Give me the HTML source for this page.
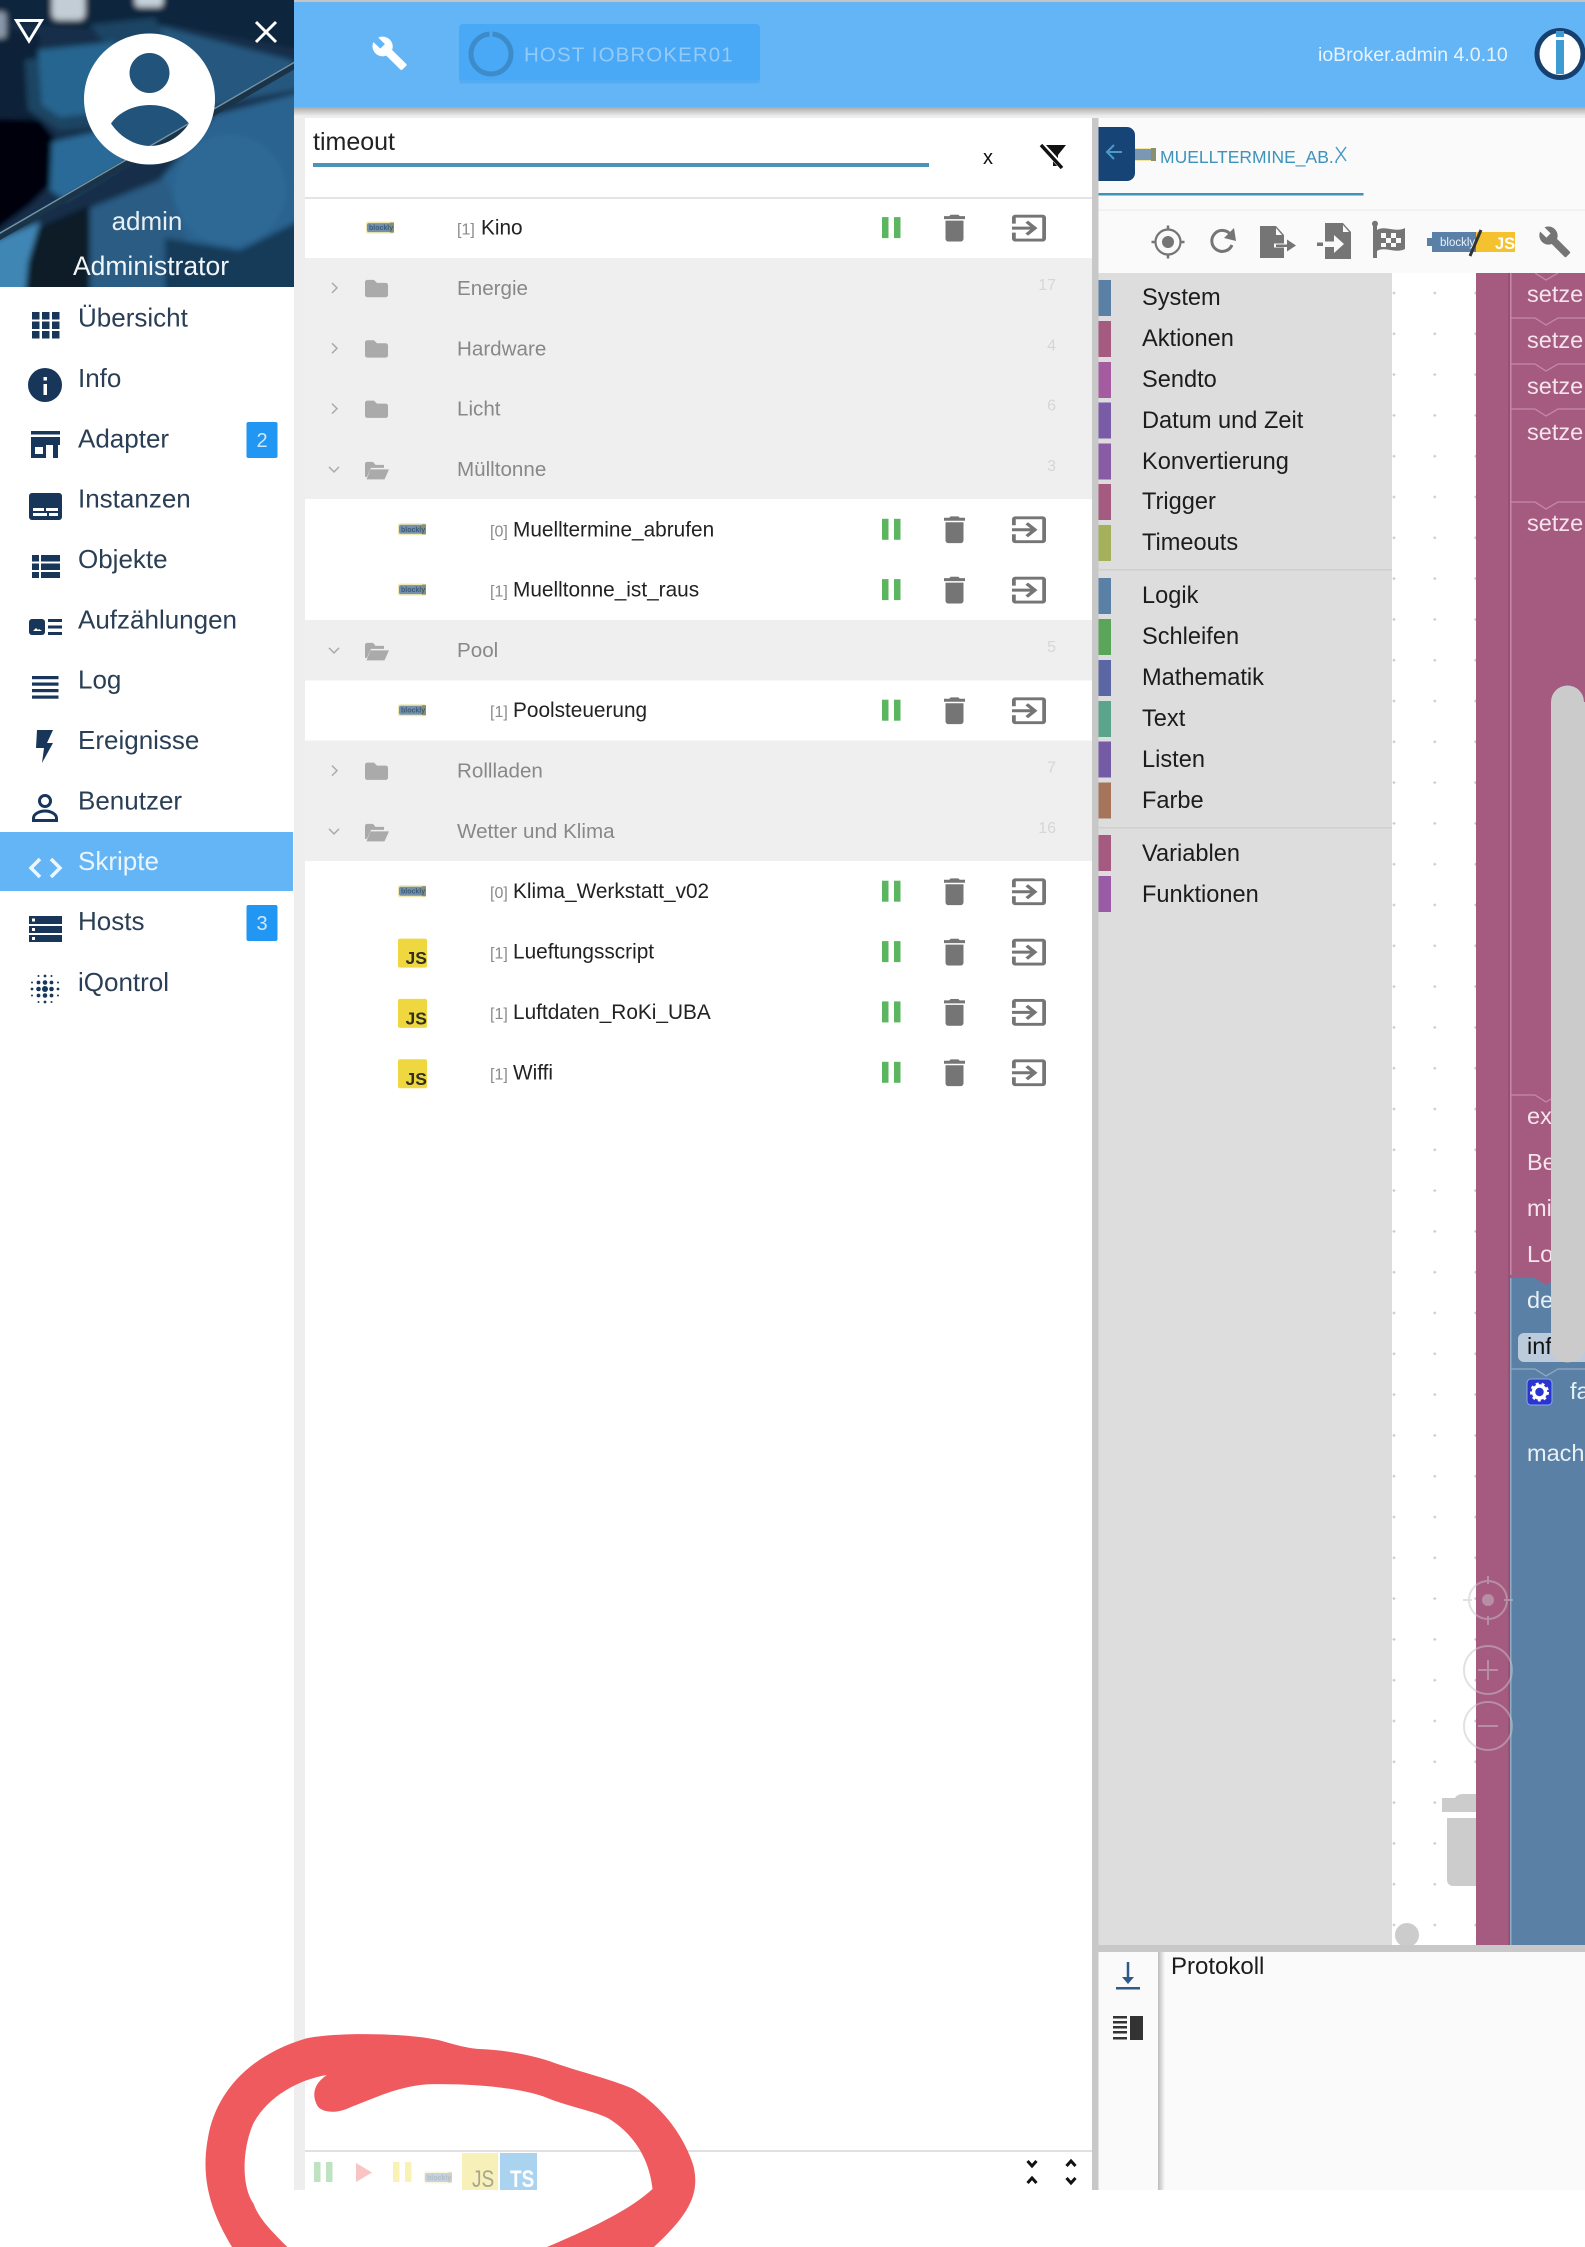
<!DOCTYPE html>
<html lang="de"><head><meta charset="utf-8"><title>ioBroker Skripte</title>
<style>
html,body{margin:0;padding:0;background:#fff;width:1585px;height:2247px;overflow:hidden}
svg{display:block;position:absolute;left:0;top:0}
text{font-family:"Liberation Sans",Arial,sans-serif;white-space:pre}
.m{font-size:26px;fill:#2a3f55}
.g{font-size:20.6px;fill:#888}
.n{font-size:20.8px;fill:#222}
.i{font-size:16px;fill:#8a8a8a}
.c{font-size:16px;fill:#d6d6d6;text-anchor:end}
.tb{font-size:23.6px;fill:#1c1c1c}
.s{font-size:23.5px;fill:#f5e4ec}
.b{font-size:23.5px;fill:#e8f0f7}
</style></head><body>
<svg width="1585" height="2247" viewBox="0 0 1585 2247" xmlns="http://www.w3.org/2000/svg">
<defs>
<linearGradient id="hs" x1="0" y1="0" x2="0" y2="1"><stop offset="0" stop-color="#a8a8a8"/><stop offset="1" stop-color="#eee"/></linearGradient>
<linearGradient id="ls" x1="0" y1="0" x2="1" y2="0"><stop offset="0" stop-color="#bbb"/><stop offset="1" stop-color="#fafafa"/></linearGradient>
<filter id="bl" x="-20%" y="-20%" width="140%" height="140%"><feGaussianBlur stdDeviation="3"/></filter>
<clipPath id="sc"><rect x="0" y="0" width="294" height="287"/></clipPath>
<clipPath id="wc"><rect x="1392" y="273" width="193" height="1672"/></clipPath>
<pattern id="grid" x="1373.6" y="272.6" width="40.8" height="40.8" patternUnits="userSpaceOnUse"><path d="M19 20.4h2.8M20.4 19v2.8" stroke="#c9c9c9" stroke-width="1.2"/></pattern>
<g id="controls">
<rect x="882" y="-10.5" width="6.5" height="21" fill="#5cb660"/><rect x="894" y="-10.5" width="6.5" height="21" fill="#5cb660"/>
<svg x="944" y="-13" width="21" height="27" viewBox="5 3 14 18" preserveAspectRatio="none" style="position:static"><path fill="#757575" d="M6 19c0 1.1.9 2 2 2h8c1.1 0 2-.9 2-2V7H6v12zM19 4h-3.5l-1-1h-5l-1 1H5v2h14V4z"/></svg>
<svg x="1012" y="-13" width="34" height="27" viewBox="3 3 18 18" preserveAspectRatio="none" style="position:static"><path fill="#757575" d="M10.09 15.59L11.5 17l5-5-5-5-1.41 1.41L12.67 11H3v2h9.67l-2.58 2.59zM19 3H5c-1.11 0-2 .9-2 2v4h2V5h14v14H5v-4H3v4c0 1.1.89 2 2 2h14c1.1 0 2-.9 2-2V5c0-1.1-.9-2-2-2z"/></svg>
</g>
<g id="blk">
<rect x="0" y="-6" width="28" height="12" fill="#efe9b4" rx="2"/>
<rect x="1" y="-4.5" width="25" height="9" fill="#7591aa" rx="2"/>
<rect x="24" y="-5" width="4" height="10" fill="#8a8f70"/>
<text x="3" y="2.5" font-size="7" font-weight="bold" fill="#3a5a78">blockly</text>
</g>
<g id="js">
<rect x="398" y="-13" width="29" height="29" rx="2" fill="#efd83f"/>
<text x="405.5" y="12.5" font-size="17.5" font-weight="bold" fill="#2f2f22">JS</text>
</g>
<path id="folder" d="M0 2.5C0 1.1 1 0 2.3 0H9l3 3h8.7C22 3 23 4 23 5.3V15c0 1.2-1 2.3-2.300 2.300H2.300C1 17.300 0 16.200 0 15z" fill="#aaa"/>
<path id="fopen" d="M0 2C0 .9 .9 0 2 0h6l2.500 3H19v3H6L2 15H0zM5.500 7.500H24L19.500 17.500H1.500z" fill="#aaa"/>
</defs>

<!-- page frame -->
<rect x="0" y="0" width="1585" height="2247" fill="#fff"/>
<rect x="294" y="0" width="1291" height="2190" fill="#eee"/>
<rect x="294" y="0" width="1291" height="3" fill="#c4c4c4"/>
<rect x="294" y="107" width="1291" height="9" fill="url(#hs)"/>
<rect x="294" y="2" width="1291" height="105" fill="#64b5f6"/>

<!-- header -->
<g transform="translate(371,35) scale(1.55)"><path fill="#fff" d="M22.7 19l-9.100-9.100c.9-2.300.4-5-1.500-6.900-2-2-5-2.400-7.400-1.300L9 6 6 9 1.600 4.700C.4 7.100.9 10.100 2.900 12.100c1.900 1.900 4.600 2.400 6.900 1.500l9.100 9.100c.4.400 1 .4 1.400 0l2.300-2.300c.5-.4.5-1.100.1-1.400z" transform="scale(1,.98)"/></g>
<rect x="459" y="24" width="301" height="59" rx="4" fill="#4aa9f6"/>
<rect x="459" y="80" width="301" height="4" fill="#5aaef3" opacity=".6"/>
<ellipse cx="491" cy="54" rx="20" ry="20" fill="none" stroke="#3d8cc9" stroke-width="5"/>
<rect x="489.500" y="30" width="3" height="20" fill="#4aa9f6"/>
<text x="524" y="61.500" font-size="20.500" letter-spacing="1.100" fill="#93cbf8">HOST IOBROKER01</text>
<text x="1318" y="61" font-size="19.500" fill="#e6f3fd">ioBroker.admin 4.0.10</text>
<ellipse cx="1560" cy="54" rx="23" ry="23.500" fill="#fff" stroke="#16406f" stroke-width="5"/>
<rect x="1556" y="31" width="8" height="6" fill="#3f9bd4"/>
<rect x="1556" y="40" width="8" height="34" fill="#3f9bd4"/>

<!-- sidebar -->
<rect x="0" y="0" width="294" height="2190" fill="#fff"/>
<g clip-path="url(#sc)"><g filter="url(#bl)">
<rect x="-30" y="-30" width="360" height="350" fill="#142f48"/>
<polygon points="-30,-30 330,-30 330,55 170,25 100,30 -30,20" fill="#10263c"/>
<polygon points="-30,20 40,35 35,130 -30,130" fill="#0c2438"/>
<polygon points="155,25 290,60 320,85 240,100 200,110 150,70" fill="#25597f"/>
<polygon points="90,25 155,18 175,60 110,50" fill="#1b4465"/>
<rect x="52" y="-8" width="33" height="28" rx="6" fill="#c2cdd6"/>
<rect x="135" y="-8" width="28" height="15" rx="4" fill="#c5d0da"/>
<rect x="-8" y="12" width="14" height="26" rx="3" fill="#8a9aaa"/>
<polygon points="25,60 110,50 120,125 60,130 28,110" fill="#1c4463"/>
<polygon points="38,50 115,42 105,112 60,117 42,105" fill="#286590"/>
<polygon points="-30,118 40,120 60,145 50,185 30,205 -30,250" fill="#02060a"/>
<polygon points="52,142 105,130 130,160 65,200 50,190" fill="#2a6a98"/>
<circle cx="149.500" cy="100" r="60" fill="#24537a"/>
<polygon points="215,115 330,85 330,320 170,320 160,180" fill="#2b6490"/>
<polygon points="90,208 165,178 215,320 90,320" fill="#295c84"/>
<polygon points="28,232 90,205 90,320 28,320" fill="#0a1a28"/>
<polygon points="-30,252 40,222 28,262 22,320 -30,320" fill="#3f86b5"/>
<circle cx="230" cy="190" r="56" fill="#2e6894"/>
<polygon points="165,238 240,250 330,205 330,320 165,320" fill="#163a58"/>
</g>
<line x1="-5" y1="239" x2="300" y2="62" stroke="#1b3346" stroke-width="7"/>
<line x1="-5" y1="236" x2="300" y2="59" stroke="#6f93aa" stroke-width="1.500"/>
</g>
<polygon points="16.500,20.500 41.500,20.500 29,41" fill="none" stroke="#fff" stroke-width="3"/>
<path d="M256 22L276 42M276 22L256 42" stroke="#fff" stroke-width="3"/>
<path fill="#fff" fill-rule="evenodd" d="M149.500 33.500a65.500 65.500 0 1 0 .01 0zM149.500 53a20 20 0 1 0 .01 0zM111 123.500C120 111 135 105 150 105S179 111 189 123.500C180 137 165 146 150 146S120 137 111 123.500z"/>
<text x="147" y="230" text-anchor="middle" font-size="26" fill="#e8f0f5">admin</text>
<text x="151" y="275" text-anchor="middle" font-size="26.500" fill="#f2f6f9">Administrator</text>

<!-- menu -->
<rect x="0" y="832" width="293" height="59" fill="#64b5f6"/>
<text class="m" x="78" y="326.600">Übersicht</text>
<text class="m" x="78" y="387">Info</text>
<text class="m" x="78" y="447.300">Adapter</text>
<text class="m" x="78" y="507.700">Instanzen</text>
<text class="m" x="78" y="568">Objekte</text>
<text class="m" x="78" y="628.400">Aufzählungen</text>
<text class="m" x="78" y="688.700">Log</text>
<text class="m" x="78" y="749">Ereignisse</text>
<text class="m" x="78" y="809.400">Benutzer</text>
<text class="m" x="78" y="869.800" style="fill:#eaf5fe">Skripte</text>
<text class="m" x="78" y="930">Hosts</text>
<text class="m" x="78" y="991">iQontrol</text>

<g fill="#17365a">
<!-- apps -->
<rect x="32" y="312" width="7.500" height="7.500"/><rect x="42" y="312" width="7.500" height="7.500"/><rect x="52" y="312" width="7.500" height="7.500"/>
<rect x="32" y="321.500" width="7.500" height="7.500"/><rect x="42" y="321.500" width="7.500" height="7.500"/><rect x="52" y="321.500" width="7.500" height="7.500"/>
<rect x="32" y="331" width="7.500" height="7.500"/><rect x="42" y="331" width="7.500" height="7.500"/><rect x="52" y="331" width="7.500" height="7.500"/>
<!-- info -->
<circle cx="45" cy="385" r="17"/><rect x="43.500" y="384" width="3.500" height="11" fill="#fff"/><rect x="43.500" y="377" width="3.500" height="3.500" fill="#fff"/>
<!-- store -->
<rect x="31" y="431" width="29" height="3.500"/><path d="M31 437H60V445H58V458H53V445H46V458H31V445z"/><rect x="35" y="447" width="8" height="7" fill="#fff"/>
<!-- instances -->
<rect x="29" y="493" width="33" height="27" rx="3"/><rect x="33" y="508" width="11" height="3" fill="#fff"/><rect x="46" y="508" width="12" height="3" fill="#fff"/><rect x="33" y="513" width="14" height="3" fill="#fff"/><rect x="49" y="513" width="9" height="3" fill="#fff"/>
<!-- objects -->
<rect x="32" y="555" width="7" height="6.500"/><rect x="41" y="555" width="19" height="6.500"/><rect x="32" y="563.500" width="7" height="6.500"/><rect x="41" y="563.500" width="19" height="6.500"/><rect x="32" y="572" width="7" height="6"/><rect x="41" y="572" width="19" height="6"/>
<!-- enums -->
<rect x="29" y="619" width="16" height="16" rx="3"/><path d="M33 631l3-3 2 2 1-1 3 2z" fill="#fff"/><rect x="48" y="619" width="14" height="3"/><rect x="48" y="625.500" width="14" height="3"/><rect x="48" y="632" width="14" height="3"/>
<!-- log -->
<rect x="32" y="676" width="26.500" height="3.200"/><rect x="32" y="682.500" width="26.500" height="3.200"/><rect x="32" y="689" width="26.500" height="3.200"/><rect x="32" y="695.500" width="26.500" height="3.200"/>
<!-- flash -->
<path d="M37 730H53L47 743H53L42 763L44 748H36z"/>
<!-- hosts -->
<path fill-rule="evenodd" d="M29 916H62V924H29zM29 926H62V933H29zM29 935H62V942H29zM32 918.500v3h3v-3zM32 928v3h3v-3zM32 937v3h3v-3z"/>
</g>
<!-- user -->
<g fill="none" stroke="#17365a" stroke-width="3"><circle cx="45" cy="801" r="5.500"/><path d="M33.500 820.500v-2.500c0-4 6-7 11.500-7s11.500 3 11.500 7v2.500z"/></g>
<!-- code -->
<path d="M40 859L31 868L40 877M51 859L60 868L51 877" fill="none" stroke="#eef7ff" stroke-width="3.500"/>
<!-- iQontrol dots -->
<g fill="#17365a">
<circle cx="45" cy="989" r="3"/><circle cx="38.500" cy="989" r="2.300"/><circle cx="51.500" cy="989" r="2.300"/><circle cx="45" cy="982.500" r="2.300"/><circle cx="45" cy="995.500" r="2.300"/>
<circle cx="38.500" cy="982.500" r="1.900"/><circle cx="51.500" cy="982.500" r="1.900"/><circle cx="38.500" cy="995.500" r="1.900"/><circle cx="51.500" cy="995.500" r="1.900"/>
<circle cx="32" cy="989" r="1.400"/><circle cx="58" cy="989" r="1.400"/><circle cx="45" cy="976" r="1.400"/><circle cx="45" cy="1002" r="1.400"/>
<circle cx="32" cy="982.500" r="1"/><circle cx="58" cy="982.500" r="1"/><circle cx="32" cy="995.500" r="1"/><circle cx="58" cy="995.500" r="1"/>
<circle cx="38.500" cy="976" r="1"/><circle cx="51.500" cy="976" r="1"/><circle cx="38.500" cy="1002" r="1"/><circle cx="51.500" cy="1002" r="1"/>
</g>
<!-- badges -->
<rect x="246.500" y="422" width="31" height="36" rx="2" fill="#2196f3"/><text x="262" y="447" text-anchor="middle" font-size="20" fill="#cfe8fc">2</text>
<rect x="246.500" y="905" width="31" height="36" rx="2" fill="#2196f3"/><text x="262" y="930" text-anchor="middle" font-size="20" fill="#cfe8fc">3</text>

<!-- list panel -->
<rect x="305" y="118" width="787" height="2072" fill="#fff"/>
<text x="313" y="150" font-size="25" fill="#222">timeout</text>
<rect x="313" y="163" width="616" height="4" fill="#4b94b8"/>
<text x="983" y="164" font-size="20" fill="#111">x</text>
<path d="M1046 145H1066L1058 155V166H1053V155z" fill="#111"/>
<path d="M1041 144L1063 168" stroke="#fff" stroke-width="6"/><path d="M1041 145L1062 168" stroke="#111" stroke-width="3.500"/>
<rect x="305" y="197" width="787" height="2" fill="#e4e4e4"/>

<rect x="305" y="258" width="787" height="241" fill="#efefef"/>
<rect x="305" y="620" width="787" height="60.500" fill="#efefef"/>
<rect x="305" y="740.500" width="787" height="120.500" fill="#efefef"/>

<!-- row 0 Kino -->
<g transform="translate(0,227.600)"><use href="#blk" x="366"/><text class="i" x="457" y="7">[1]</text><text class="n" x="481" y="7">Kino</text><use href="#controls"/></g>
<!-- groups -->
<g transform="translate(0,287.900)"><path d="M332 -5L337 0L332 5" fill="none" stroke="#aaa" stroke-width="1.500"/><use href="#folder" x="365" y="-8"/><text class="g" x="457" y="7">Energie</text><text class="c" x="1056" y="2">17</text></g>
<g transform="translate(0,348.300)"><path d="M332 -5L337 0L332 5" fill="none" stroke="#aaa" stroke-width="1.500"/><use href="#folder" x="365" y="-8"/><text class="g" x="457" y="7">Hardware</text><text class="c" x="1056" y="2">4</text></g>
<g transform="translate(0,408.600)"><path d="M332 -5L337 0L332 5" fill="none" stroke="#aaa" stroke-width="1.500"/><use href="#folder" x="365" y="-8"/><text class="g" x="457" y="7">Licht</text><text class="c" x="1056" y="2">6</text></g>
<g transform="translate(0,468.900)"><path d="M329 -2L334 3L339 -2" fill="none" stroke="#aaa" stroke-width="1.500"/><use href="#fopen" x="365" y="-7"/><text class="g" x="457" y="7">Mülltonne</text><text class="c" x="1056" y="2">3</text></g>
<g transform="translate(0,529.300)"><use href="#blk" x="398"/><text class="i" x="490" y="7">[0]</text><text class="n" x="513" y="7">Muelltermine_abrufen</text><use href="#controls"/></g>
<g transform="translate(0,589.600)"><use href="#blk" x="398"/><text class="i" x="490" y="7">[1]</text><text class="n" x="513" y="7">Muelltonne_ist_raus</text><use href="#controls"/></g>
<g transform="translate(0,649.900)"><path d="M329 -2L334 3L339 -2" fill="none" stroke="#aaa" stroke-width="1.500"/><use href="#fopen" x="365" y="-7"/><text class="g" x="457" y="7">Pool</text><text class="c" x="1056" y="2">5</text></g>
<g transform="translate(0,710.200)"><use href="#blk" x="398"/><text class="i" x="490" y="7">[1]</text><text class="n" x="513" y="7">Poolsteuerung</text><use href="#controls"/></g>
<g transform="translate(0,770.600)"><path d="M332 -5L337 0L332 5" fill="none" stroke="#aaa" stroke-width="1.500"/><use href="#folder" x="365" y="-8"/><text class="g" x="457" y="7">Rollladen</text><text class="c" x="1056" y="2">7</text></g>
<g transform="translate(0,830.900)"><path d="M329 -2L334 3L339 -2" fill="none" stroke="#aaa" stroke-width="1.500"/><use href="#fopen" x="365" y="-7"/><text class="g" x="457" y="7">Wetter und Klima</text><text class="c" x="1056" y="2">16</text></g>
<g transform="translate(0,891.200)"><use href="#blk" x="398"/><text class="i" x="490" y="7">[0]</text><text class="n" x="513" y="7">Klima_Werkstatt_v02</text><use href="#controls"/></g>
<g transform="translate(0,951.600)"><use href="#js"/><text class="i" x="490" y="7">[1]</text><text class="n" x="513" y="7">Lueftungsscript</text><use href="#controls"/></g>
<g transform="translate(0,1011.900)"><use href="#js"/><text class="i" x="490" y="7">[1]</text><text class="n" x="513" y="7">Luftdaten_RoKi_UBA</text><use href="#controls"/></g>
<g transform="translate(0,1072.300)"><use href="#js"/><text class="i" x="490" y="7">[1]</text><text class="n" x="513" y="7">Wiffi</text><use href="#controls"/></g>

<!-- list bottom toolbar -->
<rect x="305" y="2150" width="787" height="2" fill="#e0e0e0"/>
<rect x="314" y="2162" width="6.500" height="20" fill="#bfe3c1"/><rect x="326" y="2162" width="6.500" height="20" fill="#bfe3c1"/>
<polygon points="356,2163 372,2172.500 356,2182" fill="#f8c4c4"/>
<rect x="393" y="2162" width="6.500" height="20" fill="#f8f3b4"/><rect x="405" y="2162" width="6.500" height="20" fill="#f8f3b4"/>
<g opacity=".4"><use href="#blk" x="424" y="2177.500"/></g>
<rect x="462" y="2153" width="36" height="37" fill="#f7f0b9"/><text transform="translate(472,2187) scale(1,1.25)" font-size="19" fill="#a6a58f">JS</text>
<rect x="500" y="2153" width="37" height="37" fill="#a9d3ef"/><text transform="translate(510,2187) scale(1,1.25)" font-size="19" font-weight="bold" fill="#fff">TS</text>
<g fill="none" stroke="#111" stroke-width="3">
<path d="M1027.500 2161L1032 2166L1036.500 2161M1027.500 2183L1032 2178L1036.500 2183"/>
<path d="M1066.500 2166L1071 2161L1075.500 2166M1066.500 2178L1071 2183L1075.500 2178"/>
</g>

<!-- separator -->
<rect x="1092" y="118" width="6.500" height="2072" fill="#c8c8c8"/>

<!-- right panel -->
<rect x="1098.500" y="118" width="486.500" height="155" fill="#fafafa"/>
<rect x="1098.500" y="209.500" width="486.500" height="1.500" fill="#efefef"/>
<path d="M1098.500 127H1127a8 8 0 0 1 8 8v38a8 8 0 0 1-8 8H1098.500z" fill="#164477"/>
<path d="M1122 152H1108M1114 145L1107 152L1114 159" fill="none" stroke="#4a9bc8" stroke-width="2"/>
<rect x="1135" y="148" width="21" height="13" fill="#f1e6a0"/><rect x="1135" y="149" width="16" height="11" fill="#7a97b3"/><rect x="1151" y="148" width="5" height="13" fill="#8a8f70"/>
<text x="1160" y="163" font-size="17.500" fill="#3d93bb">MUELLTERMINE_AB..</text>
<path d="M1336 147L1346 161M1346 147L1336 161" stroke="#4a9bc8" stroke-width="1.500"/>
<rect x="1098.500" y="193" width="265" height="2.500" fill="#3f93ba"/>

<!-- toolbar icons -->
<g fill="#757575">
<circle cx="1168" cy="242" r="12.500" fill="none" stroke="#757575" stroke-width="2.200"/><circle cx="1168" cy="242" r="6"/>
<path d="M1168 225.500v5M1168 253.500v5M1151.500 242h5M1179.500 242h5" stroke="#757575" stroke-width="2.500"/>
<path d="M1232 245a10.500 10.500 0 1 1-1-10" fill="none" stroke="#757575" stroke-width="3"/><polygon points="1234,228 1236,241 1224,238"/>
<path d="M1260 226H1276L1284 235V258H1260z"/><polygon points="1276,228 1282,235 1276,235" fill="#fafafa"/>
<rect x="1274" y="243.500" width="14" height="4" fill="#fafafa"/><rect x="1276" y="244.500" width="12" height="2.500"/><polygon points="1287,239.500 1296,245.500 1287,251.500"/>
<path d="M1325 223H1343L1351 232V259H1325z"/><polygon points="1343,225 1349,232 1343,232" fill="#fafafa"/>
<path d="M1325 241.500H1334V235L1344 244L1334 253V247H1325z" fill="#fafafa"/>
<rect x="1317" y="242.500" width="6" height="3.500"/>
<path d="M1373 226a3 3 0 1 1 4 0V258H1373z"/>
<path d="M1377 230C1385 225 1395 233 1405 228V249C1395 254 1385 246 1377 251z"/>
<g fill="#fafafa"><rect x="1381" y="233" width="5" height="5"/><rect x="1391" y="233" width="5" height="5"/><rect x="1386" y="238" width="5" height="5"/><rect x="1396" y="238" width="5" height="5"/><rect x="1381" y="243" width="5" height="4"/><rect x="1391" y="243" width="5" height="4"/></g>
</g>
<rect x="1432" y="232" width="48" height="20" fill="#5b80a8"/><rect x="1427" y="238" width="6" height="8" fill="#5b80a8"/>
<rect x="1476" y="232" width="39" height="20" fill="#f4c22e"/>
<text x="1440" y="246" font-size="11.500" fill="#eaf0f6">blockly</text>
<text x="1495" y="249" font-size="16.500" font-weight="bold" fill="#fff">JS</text>
<path d="M1481 230L1470 256" stroke="#333" stroke-width="3"/>
<g transform="translate(1538,225) scale(1.400)"><path fill="#757575" d="M22.700 19l-9.100-9.100c.9-2.300.4-5-1.500-6.900-2-2-5-2.400-7.400-1.300L9 6 6 9 1.600 4.700C.4 7.100.9 10.100 2.900 12.100c1.900 1.900 4.600 2.400 6.900 1.500l9.100 9.100c.4.400 1 .4 1.400 0l2.300-2.300c.5-.4.5-1.100.1-1.400z"/></g>

<!-- toolbox -->
<rect x="1098.500" y="273" width="294" height="1672" fill="#ddd"/>
<rect x="1098.500" y="280" width="12.500" height="36" fill="#5b80a5"/><text class="tb" x="1142" y="305">System</text>
<rect x="1098.500" y="321" width="12.500" height="36" fill="#a55b80"/><text class="tb" x="1142" y="346">Aktionen</text>
<rect x="1098.500" y="362" width="12.500" height="36" fill="#a55ba0"/><text class="tb" x="1142" y="387">Sendto</text>
<rect x="1098.500" y="402.500" width="12.500" height="36" fill="#7a5ba8"/><text class="tb" x="1142" y="428">Datum und Zeit</text>
<rect x="1098.500" y="443.500" width="12.500" height="36" fill="#8a5ba5"/><text class="tb" x="1142" y="469">Konvertierung</text>
<rect x="1098.500" y="484" width="12.500" height="36" fill="#a55b80"/><text class="tb" x="1142" y="509">Trigger</text>
<rect x="1098.500" y="525" width="12.500" height="36" fill="#a5b05b"/><text class="tb" x="1142" y="550">Timeouts</text>
<rect x="1098.500" y="569" width="294" height="1.500" fill="#cfcfcf"/>
<rect x="1098.500" y="578" width="12.500" height="36" fill="#5b80a5"/><text class="tb" x="1142" y="603">Logik</text>
<rect x="1098.500" y="619" width="12.500" height="36" fill="#5ba55b"/><text class="tb" x="1142" y="644">Schleifen</text>
<rect x="1098.500" y="660" width="12.500" height="36" fill="#5b67a5"/><text class="tb" x="1142" y="685">Mathematik</text>
<rect x="1098.500" y="701" width="12.500" height="36" fill="#5ba58c"/><text class="tb" x="1142" y="726">Text</text>
<rect x="1098.500" y="741.500" width="12.500" height="36" fill="#745ba5"/><text class="tb" x="1142" y="767">Listen</text>
<rect x="1098.500" y="782.500" width="12.500" height="36" fill="#a5745b"/><text class="tb" x="1142" y="808">Farbe</text>
<rect x="1098.500" y="827" width="294" height="1.500" fill="#cfcfcf"/>
<rect x="1098.500" y="835" width="12.500" height="36" fill="#a55b80"/><text class="tb" x="1142" y="861">Variablen</text>
<rect x="1098.500" y="876" width="12.500" height="36" fill="#995ba5"/><text class="tb" x="1142" y="902">Funktionen</text>

<!-- workspace -->
<rect x="1392" y="273" width="193" height="1672" fill="#fff"/>
<rect x="1392" y="273" width="193" height="1672" fill="url(#grid)"/>
<g clip-path="url(#wc)">
<g fill="#ccc"><rect x="1442" y="1798" width="40" height="14"/><path d="M1455 1798q2-4 8-4H1480v4z"/><path d="M1447 1818H1480V1886H1453a6 6 0 0 1-6-6z"/></g>
<rect x="1476" y="273" width="34" height="1672" fill="#a55b80"/>
<rect x="1508.500" y="273" width="1.200" height="1672" fill="#8d4a6b"/>
<rect x="1510" y="273" width="75" height="1005" fill="#a55b80"/>
<rect x="1510" y="1278" width="75" height="667" fill="#5b80a5"/>
<rect x="1510" y="273" width="1.500" height="1005" fill="#c68aa8"/>
<rect x="1510" y="1278" width="1.500" height="667" fill="#8fabc4"/>
<g fill="none" stroke="#c68aa8" stroke-width="1.300">
<path d="M1535 273L1546 280L1558 273"/>
<path d="M1510 318H1535L1546 325L1558 318H1585"/>
<path d="M1510 364H1535L1546 371L1558 364H1585"/>
<path d="M1510 409H1535L1546 416L1558 409H1585"/>
<path d="M1510 502H1535L1546 509L1558 502H1585"/>
<path d="M1510 1095H1535L1546 1102L1558 1095H1585"/>
</g>
<path d="M1510 1278H1535L1546 1285L1558 1278H1585V1275H1510z" fill="#a55b80"/>
<path d="M1510 1369H1535L1546 1376L1558 1369H1585" fill="none" stroke="#8fabc4" stroke-width="1.300"/>
<g>
<text class="s" x="1527" y="302">setze</text>
<text class="s" x="1527" y="348">setze</text>
<text class="s" x="1527" y="394">setze</text>
<text class="s" x="1527" y="440">setze</text>
<text class="s" x="1527" y="531">setze</text>
<text class="s" x="1527" y="1124">ex</text>
<text class="s" x="1527" y="1170">Be</text>
<text class="s" x="1527" y="1216">mi</text>
<text class="s" x="1527" y="1262">Lo</text>
<text class="b" x="1527" y="1308">de</text>
</g>
<rect x="1518" y="1333" width="80" height="29" rx="6" fill="#bccbdb"/>
<text x="1527" y="1354" font-size="23.500" fill="#111">inf</text>
<rect x="1527" y="1379" width="25" height="26" rx="4" fill="#2a35d0" stroke="#8fa6e8" stroke-width="1"/>
<circle cx="1539.500" cy="1392" r="6" fill="none" stroke="#fff" stroke-width="3.500"/>
<circle cx="1539.500" cy="1392" r="8.500" fill="none" stroke="#fff" stroke-width="2" stroke-dasharray="3 3"/>
<text class="b" x="1570" y="1399">fa</text>
<text class="b" x="1527" y="1461">mach</text>
<!-- scrollbar -->
<path d="M1551 702a16 16 0 0 1 33 0H1590V1352H1584a16 10 0 0 1-33 0z" fill="#cbcbcb"/>
<!-- zoom controls -->
<g fill="none" stroke="#c9c2c6" stroke-width="2" opacity=".5">
<circle cx="1488" cy="1600" r="19"/><circle cx="1488" cy="1600" r="6" fill="#c9c2c6" stroke="none"/><path d="M1463 1600H1472M1504 1600H1513M1488 1576V1584M1488 1616V1625"/>
<circle cx="1488" cy="1670" r="24"/><path d="M1478 1670H1498M1488 1660V1680"/>
<circle cx="1488" cy="1726" r="24"/><path d="M1478 1726H1498"/>
</g>
<circle cx="1407" cy="1935" r="12" fill="#ccc"/>
</g>

<!-- log panel -->
<rect x="1098.500" y="1945" width="486.500" height="7" fill="#c8c8c8"/>
<rect x="1098.500" y="1952" width="486.500" height="238" fill="#fafafa"/>
<rect x="1158" y="1952" width="7" height="238" fill="url(#ls)"/>
<text x="1171" y="1974" font-size="24" fill="#1c1c1c">Protokoll</text>
<path d="M1128 1962V1979" stroke="#2d5a8a" stroke-width="2.500"/><polygon points="1122,1977 1134,1977 1128,1984" fill="#2d5a8a"/>
<rect x="1116" y="1987" width="24" height="2.500" fill="#2d5a8a"/>
<g fill="#333"><rect x="1113" y="2016" width="14" height="2.500"/><rect x="1113" y="2021" width="14" height="2.500"/><rect x="1113" y="2026" width="14" height="2.500"/><rect x="1113" y="2031" width="14" height="2.500"/><rect x="1113" y="2037" width="14" height="2.500"/><rect x="1130" y="2016" width="13" height="24"/></g>

<!-- white bottom -->
<rect x="294" y="2190" width="1291" height="57" fill="#fff"/>

<!-- red annotation -->
<g transform="translate(180,1990) scale(.587,.3333)">
<path fill="#ee5a5e" d="M90 775C50 660 35 560 48 440C60 320 110 200 215 145C270 125 390 130 440 150C470 165 490 175 510 177C560 180 610 200 640 220C680 245 730 265 770 295C820 345 860 440 875 530C885 610 870 670 805 775L620 775C680 730 760 670 805 597C800 520 780 440 730 385C700 360 660 350 620 320C570 290 490 280 420 283C370 290 330 325 290 352C270 370 245 370 235 350C225 320 225 285 250 255C200 270 150 320 125 400C105 480 105 590 125 640C135 690 160 730 185 775Z"/>
</g>
</svg>
</body></html>
